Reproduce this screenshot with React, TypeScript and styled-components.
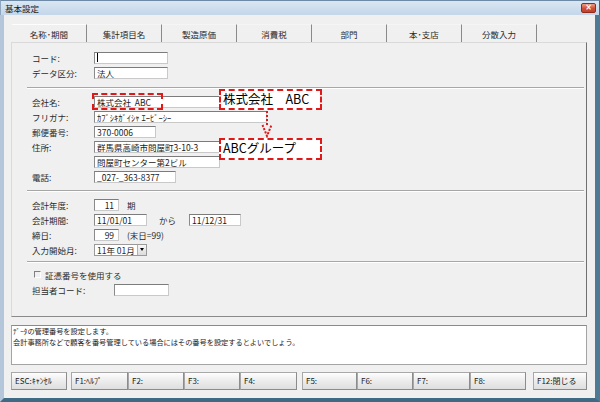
import React from 'react'
import styled, { createGlobalStyle } from 'styled-components'

const GlobalStyle = createGlobalStyle`
  html, body {
    margin: 0;
    padding: 0;
    background: #f0f0f0;
  }
  body {
    font-family: "Noto Sans CJK JP", "Noto Sans", sans-serif;
    color: #000;
  }
`

const FONT = '"Noto Sans CJK JP", "Noto Sans", sans-serif'

const Window = styled.div`
  width: 600px;
  height: 402px;
  display: flex;
  flex-direction: column;
  background: #f0f0f0;
  overflow: hidden;
`

const TitleBar = styled.div`
  height: 15px;
  flex: none;
  display: flex;
  align-items: center;
  justify-content: space-between;
  box-sizing: border-box;
  padding: 0 3px 0 4px;
  border-top: 1px solid #6f8aa6;
  background: linear-gradient(#dae6f3, #c3d6ea);
  border-left: 1px solid #8fa6bf;
  border-right: 1px solid #3e6882;
`

const Title = styled.span`
  font: 8.5px ${FONT};
  color: #1a1a1a;
  line-height: 12px;
`

const CloseButton = styled.div`
  width: 15px;
  height: 10px;
  box-sizing: border-box;
  border: 1px solid #8b2c1f;
  border-radius: 2px;
  background: linear-gradient(#eb9f8c, #cf4f37 55%, #c2432c);
  color: #fff;
  font: bold 8px "DejaVu Sans", sans-serif;
  line-height: 8px;
  text-align: center;
`

const Client = styled.div`
  flex: 1;
  display: flex;
  flex-direction: column;
  box-sizing: border-box;
  padding: 9px 8px 8px 7px;
  border-left: 4px solid #b3c6da;
  border-right: 5px solid #4f7a94;
  border-bottom: 4px solid #3f6a83;
`

const Tabs = styled.div`
  display: flex;
  height: 18px;
  padding-left: 1px;
  flex: none;
`

const Tab = styled.div<{ $active?: boolean }>`
  width: 75px;
  box-sizing: border-box;
  display: flex;
  align-items: center;
  justify-content: center;
  font: 8.5px ${FONT};
  color: #2a2a2a;
  border-right: 1px solid #8a8a8a;
  border-top: 1px solid ${(p) => (p.$active ? '#fdfdfd' : '#f5f5f5')};
`

const Panel = styled.div`
  position: relative;
  height: 275px;
  flex: none;
  box-sizing: border-box;
  border: 1px solid #dadada;
  border-right-color: #707070;
  border-bottom-color: #8a8a8a;
  padding: 7px 2px 0 20px;
  display: flex;
  flex-direction: column;
`

const Section = styled.div`
  display: flex;
  flex-direction: column;
`

const Separator = styled.div<{ $top: number; $bottom: number }>`
  margin: ${(p) => p.$top}px 0 ${(p) => p.$bottom}px -5px;
  border-top: 1px solid #a7a7a7;
  border-bottom: 1px solid #ffffff;
`

const Row = styled.div`
  display: flex;
  align-items: center;
  height: 15px;
  font: 8.5px ${FONT};
  color: #2a2a2a;
`

const Label = styled.div<{ $w?: number }>`
  width: ${(p) => p.$w ?? 62}px;
  flex: none;
  color: #2a2a2a;
  white-space: nowrap;
`

const Field = styled.div<{ $w: number; $right?: boolean }>`
  width: ${(p) => p.$w}px;
  height: 12px;
  flex: none;
  box-sizing: border-box;
  background: #fff;
  border: 1px solid #c9c9c9;
  border-top-color: #7c7c7c;
  border-left-color: #8a8a8a;
  padding: 0 2px;
  font: 8.5px ${FONT};
  line-height: 10px;
  color: #1a1a1a;
  white-space: nowrap;
  overflow: hidden;
  display: flex;
  align-items: center;
  justify-content: ${(p) => (p.$right ? 'flex-end' : 'flex-start')};
`

const Caret = styled.span`
  display: inline-block;
  width: 1px;
  height: 9px;
  background: #000;
`

const After = styled.span<{ $gap: number }>`
  margin-left: ${(p) => p.$gap}px;
  margin-right: ${(p) => (p.$gap > 10 ? 13 : 0)}px;
  color: #2a2a2a;
`

const Select = styled.div`
  width: 53px;
  height: 12px;
  box-sizing: border-box;
  background: #fff;
  border: 1px solid #9a9a9a;
  display: flex;
  align-items: center;
  justify-content: space-between;
  padding-left: 2px;
  font: 8.5px ${FONT};
`

const SelectArrow = styled.div`
  width: 9px;
  height: 10px;
  box-sizing: border-box;
  background: linear-gradient(#f8f8f8, #dcdcdc);
  border-left: 1px solid #b0b0b0;
  display: flex;
  align-items: center;
  justify-content: center;
  &::after {
    content: '';
    border-left: 2.5px solid transparent;
    border-right: 2.5px solid transparent;
    border-top: 3px solid #000;
  }
`

const CheckBox = styled.div`
  width: 7px;
  height: 7px;
  box-sizing: border-box;
  border-top: 1px solid #808080;
  border-left: 1px solid #808080;
  border-right: 1px solid #fff;
  border-bottom: 1px solid #fff;
  margin: 0 4px 0 2px;
`

const Note = styled.div<{ $top: number; $h: number }>`
  position: absolute;
  left: 207px;
  top: ${(p) => p.$top}px;
  width: 103px;
  height: ${(p) => p.$h}px;
  box-sizing: border-box;
  background: #fff;
  border: 2px dashed #e01818;
  font: 12.5px ${FONT};
  line-height: 15px;
  padding-left: 2px;
  white-space: nowrap;
`

const Highlight = styled.div`
  position: absolute;
  left: 80px;
  top: 50px;
  width: 71px;
  height: 17px;
  box-sizing: border-box;
  border: 2px dashed #e01818;
`

const ArrowSvg = styled.svg`
  position: absolute;
  left: 249px;
  top: 67px;
`

const MessageBox = styled.div`
  margin-top: 8px;
  height: 40px;
  flex: none;
  box-sizing: border-box;
  background: #fff;
  border: 1px solid #a4a4a4;
  border-top-color: #8a8a8a;
  padding: 0 1px;
  font: 7.2px ${FONT};
  line-height: 10.5px;
  color: #1a1a1a;
`

const ButtonBar = styled.div`
  margin-top: 7px;
  height: 18px;
  flex: none;
  display: flex;
`

const Group = styled.div<{ $gap: number }>`
  display: flex;
  margin-left: ${(p) => p.$gap}px;
`

const FnButton = styled.div<{ $w: number }>`
  width: ${(p) => p.$w}px;
  height: 18px;
  box-sizing: border-box;
  border: 1px solid #a8a8a8;
  border-right-color: #8c8c8c;
  border-bottom-color: #8c8c8c;
  background: linear-gradient(#fdfdfd, #ececec 50%, #dedede);
  font: 8px ${FONT};
  line-height: 16px;
  padding-left: 3px;
  color: #1a1a1a;
  white-space: nowrap;
`

const tabs = ['名称･期間', '集計項目名', '製造原価', '消費税', '部門', '本･支店', '分散入力']

const App = () => {
  return (
    <Window>
      <GlobalStyle />
      <TitleBar>
        <Title>基本設定</Title>
        <CloseButton>×</CloseButton>
      </TitleBar>
      <Client>
        <Tabs>
          {tabs.map((t, i) => (
            <Tab key={t} $active={i === 0}>
              {t}
            </Tab>
          ))}
        </Tabs>
        <Panel>
          <Section>
            <Row>
              <Label>コード:</Label>
              <Field $w={74}>
                <Caret />
              </Field>
            </Row>
            <Row>
              <Label>データ区分:</Label>
              <Field $w={74}>法人</Field>
            </Row>
          </Section>
          <Separator $top={7} $bottom={5} />
          <Section>
            <Row>
              <Label>会社名:</Label>
              <Field $w={126}>株式会社&nbsp;&nbsp;ABC</Field>
            </Row>
            <Row>
              <Label>フリガナ:</Label>
              <Field $w={173}>ｶﾌﾞｼｷｶﾞｲｼｬ ｴｰﾋﾞｰｼｰ</Field>
            </Row>
            <Row>
              <Label>郵便番号:</Label>
              <Field $w={62}>370-0006</Field>
            </Row>
            <Row>
              <Label>住所:</Label>
              <Field $w={126}>群馬県高崎市問屋町3-10-3</Field>
            </Row>
            <Row>
              <Label />
              <Field $w={126}>問屋町センター第2ビル</Field>
            </Row>
            <Row>
              <Label>電話:</Label>
              <Field $w={82}>_027-_363-8377</Field>
            </Row>
          </Section>
          <Separator $top={6} $bottom={5} />
          <Section>
            <Row>
              <Label>会計年度:</Label>
              <Field $w={25} $right>
                11&nbsp;
              </Field>
              <After $gap={8}>期</After>
            </Row>
            <Row>
              <Label>会計期間:</Label>
              <Field $w={53}>11/01/01</Field>
              <After $gap={12}>から</After>
              <Field $w={52}>11/12/31</Field>
            </Row>
            <Row>
              <Label>締日:</Label>
              <Field $w={25} $right>
                99&nbsp;
              </Field>
              <After $gap={8}>(末日=99)</After>
            </Row>
            <Row>
              <Label>入力開始月:</Label>
              <Select>
                11年 01月
                <SelectArrow />
              </Select>
            </Row>
          </Section>
          <Separator $top={4} $bottom={4} />
          <Section>
            <Row>
              <CheckBox />
              証憑番号を使用する
            </Row>
            <Row>
              <Label $w={82}>担当者コード:</Label>
              <Field $w={55} />
            </Row>
          </Section>

          <Highlight />
          <Note $top={46} $h={21}>
            株式会社　ABC
          </Note>
          <ArrowSvg width="12" height="28" viewBox="0 0 12 28">
            <line x1="6" y1="1" x2="6" y2="15" stroke="#e01818" strokeWidth="2" strokeDasharray="2 2" />
            <polyline points="1.5,15 6,26 10.5,15" fill="none" stroke="#e01818" strokeWidth="2" strokeDasharray="2 1.5" />
          </ArrowSvg>
          <Note $top={95} $h={22}>
            ABCグループ
          </Note>
        </Panel>
        <MessageBox>
          ﾃﾞｰﾀの管理番号を設定します。
          <br />
          会計事務所などで顧客を番号管理している場合にはその番号を設定するとよいでしょう。
        </MessageBox>
        <ButtonBar>
          <FnButton $w={56}>ESC:ｷｬﾝｾﾙ</FnButton>
          <Group $gap={4}>
            <FnButton $w={57}>F1:ﾍﾙﾌﾟ</FnButton>
            <FnButton $w={56}>F2:</FnButton>
            <FnButton $w={56}>F3:</FnButton>
            <FnButton $w={57}>F4:</FnButton>
          </Group>
          <Group $gap={5}>
            <FnButton $w={55}>F5:</FnButton>
            <FnButton $w={56}>F6:</FnButton>
            <FnButton $w={57}>F7:</FnButton>
            <FnButton $w={56}>F8:</FnButton>
          </Group>
          <Group $gap={7}>
            <FnButton $w={54}>F12:閉じる</FnButton>
          </Group>
        </ButtonBar>
      </Client>
    </Window>
  )
}

export default App
